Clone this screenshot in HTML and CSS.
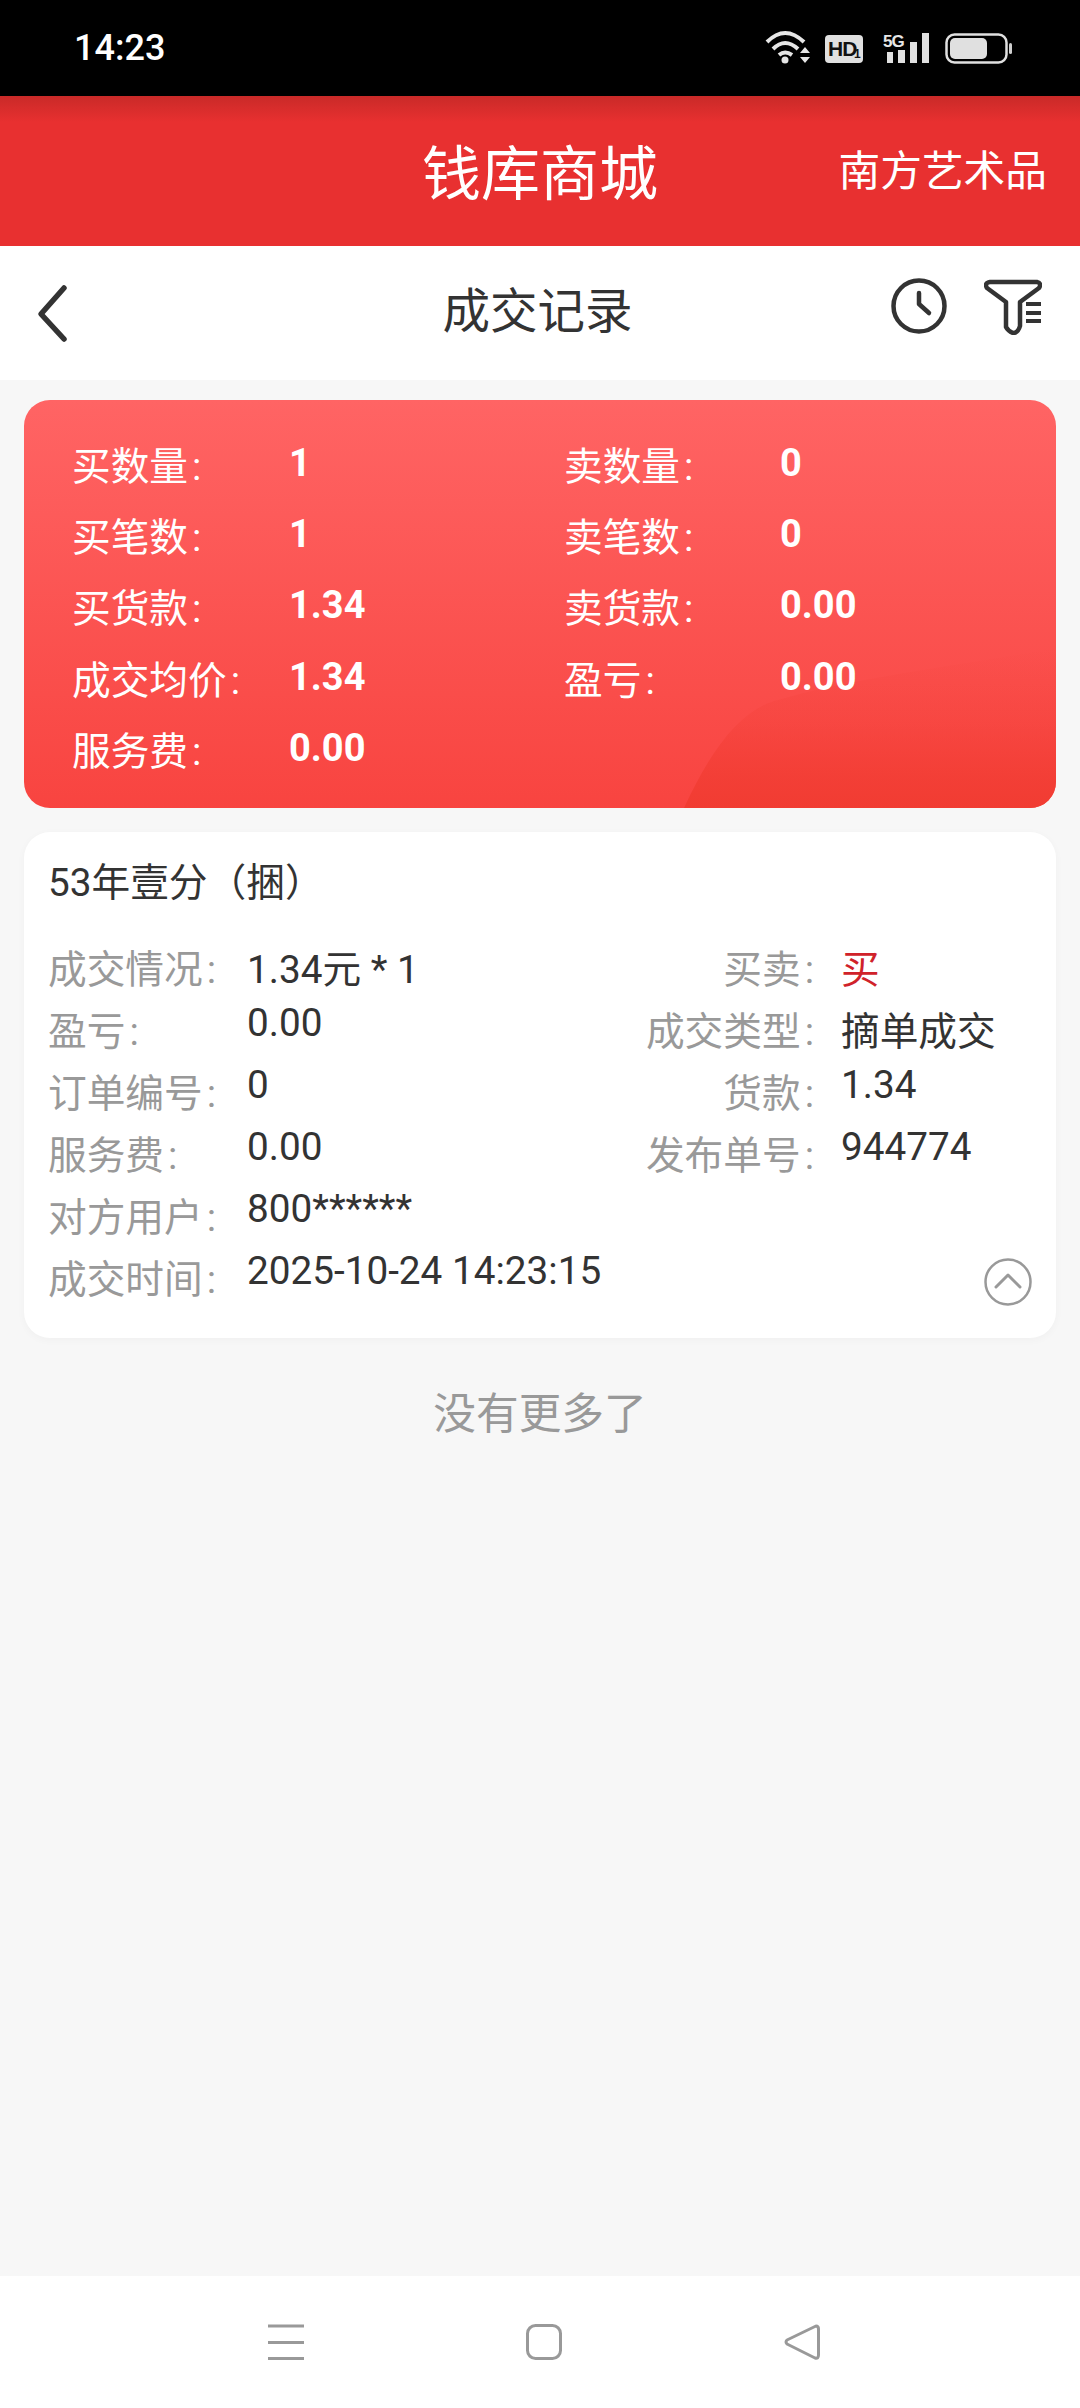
FILE: index.html
```html
<!DOCTYPE html>
<html lang="zh-CN">
<head>
<meta charset="utf-8">
<title>成交记录</title>
<link rel="stylesheet" href="styles.css">
</head>
<body>
<div class="status">
  <span class="time">14:23</span>
  <svg class="status-icons" width="250" height="40" viewBox="765 28 250 40">
    <g fill="none" stroke="#e6e6e6" stroke-width="4">
      <path d="M768 42 Q786 24 805 42"/>
      <path d="M774 49 Q786 37 799 49"/>
      <path d="M780 55 Q786 50 793 55"/>
    </g>
    <circle cx="786" cy="60" r="3.5" fill="#e6e6e6"/>
    <path d="M801 53 L806 47 L811 53 Z M801 57 L811 57 L806 63 Z" fill="#e6e6e6"/>
    <rect x="826" y="35" width="38" height="28" rx="4" fill="#e0e0e0"/>
    <text class="hd" x="829" y="56">HD</text>
    <text class="hd-sub" x="855" y="58">1</text>
    <text class="fiveg" x="884" y="47">5G</text>
    <g fill="#e0e0e0">
      <rect x="888" y="52" width="6" height="11"/>
      <rect x="899" y="50" width="7" height="13"/>
      <rect x="911" y="42" width="7" height="21"/>
      <rect x="923" y="33" width="7" height="30"/>
    </g>
    <rect x="947.5" y="34.5" width="60" height="28" rx="8" fill="none" stroke="#e0e0e0" stroke-width="2.5"/>
    <rect x="951" y="38" width="37" height="21" rx="5" fill="#e0e0e0"/>
    <rect x="1010" y="43" width="3" height="11" rx="1.5" fill="#cfcfcf"/>
  </svg>
</div>

<header class="brand">
  <span></span>
  <span class="brand-title">钱库商城</span>
  <span class="brand-side">南方艺术品</span>
</header>

<nav class="topnav">
  <svg class="back" width="40" height="60" viewBox="0 0 40 60">
    <path d="M31 5 L8 31 L31 56" fill="none" stroke="#333" stroke-width="5.5" stroke-linecap="round" stroke-linejoin="round"/>
  </svg>
  <span class="topnav-title">成交记录</span>
  <div class="topnav-tools">
    <svg width="58" height="58" viewBox="891 278 58 58">
      <circle cx="920" cy="307" r="25.5" fill="none" stroke="#333" stroke-width="4.5"/>
      <path d="M920 294 L920 305 L930 314" fill="none" stroke="#333" stroke-width="4.5" stroke-linecap="round" stroke-linejoin="round"/>
    </svg>
    <svg width="58" height="58" viewBox="985 278 58 58">
      <path d="M991 283 H1038 Q1043 284 1040 289 L1021 303 V327 Q1019 334 1014 334 Q1009 332 1007 328 V303 L988 289 Q985 284 991 283 Z" fill="none" stroke="#333" stroke-width="4.5" stroke-linejoin="round"/>
      <path d="M1027 305 H1042 M1027 314 H1042 M1027 322 H1042" fill="none" stroke="#333" stroke-width="4"/>
    </svg>
  </div>
</nav>

<main class="content">
  <section class="summary">
    <svg class="summary-wedge" width="372" height="160" viewBox="0 0 372 160">
      <defs>
        <linearGradient id="wedge" x1="0" y1="0" x2="0" y2="1">
          <stop offset="0" stop-color="#f13c32" stop-opacity="0"/>
          <stop offset="0.45" stop-color="#f13c32" stop-opacity="0.25"/>
          <stop offset="1" stop-color="#f13c32"/>
        </linearGradient>
      </defs>
      <path d="M0 160 C30 95 60 60 94 52 C170 30 260 20 372 0 V160 Z" fill="url(#wedge)"/>
    </svg>
    <div class="summary-grid">
      <span class="s-label">买数量<span class="colon">:</span></span><span class="s-value">1</span>
      <span class="s-label">卖数量<span class="colon">:</span></span><span class="s-value">0</span>
      <span class="s-label">买笔数<span class="colon">:</span></span><span class="s-value">1</span>
      <span class="s-label">卖笔数<span class="colon">:</span></span><span class="s-value">0</span>
      <span class="s-label">买货款<span class="colon">:</span></span><span class="s-value">1.34</span>
      <span class="s-label">卖货款<span class="colon">:</span></span><span class="s-value">0.00</span>
      <span class="s-label">成交均价<span class="colon">:</span></span><span class="s-value">1.34</span>
      <span class="s-label">盈亏<span class="colon">:</span></span><span class="s-value">0.00</span>
      <span class="s-label">服务费<span class="colon">:</span></span><span class="s-value">0.00</span>
    </div>
  </section>

  <section class="card">
    <h2 class="card-title">53年壹分（捆）</h2>
    <div class="card-grid">
      <span class="d-label">成交情况<span class="colon">:</span></span><span class="d-value">1.34元 * 1</span>
      <span class="d-label right">买卖<span class="colon">:</span></span><span class="d-value buy">买</span>
      <span class="d-label">盈亏<span class="colon">:</span></span><span class="d-value">0.00</span>
      <span class="d-label right">成交类型<span class="colon">:</span></span><span class="d-value">摘单成交</span>
      <span class="d-label">订单编号<span class="colon">:</span></span><span class="d-value">0</span>
      <span class="d-label right">货款<span class="colon">:</span></span><span class="d-value">1.34</span>
      <span class="d-label">服务费<span class="colon">:</span></span><span class="d-value">0.00</span>
      <span class="d-label right">发布单号<span class="colon">:</span></span><span class="d-value">944774</span>
      <span class="d-label">对方用户<span class="colon">:</span></span><span class="d-value">800******</span>
      <span></span><span></span>
      <span class="d-label">成交时间<span class="colon">:</span></span><span class="d-value wide">2025-10-24 14:23:15</span>
    </div>
    <svg class="collapse" width="50" height="50" viewBox="0 0 50 50">
      <circle cx="25" cy="25" r="22.5" fill="none" stroke="#999" stroke-width="2.5"/>
      <path d="M13 30 L25 18 L37 30" fill="none" stroke="#999" stroke-width="3" stroke-linecap="round" stroke-linejoin="round"/>
    </svg>
  </section>

  <p class="no-more">没有更多了</p>
</main>

<footer class="sysnav">
  <svg width="36" height="36" viewBox="0 0 36 36">
    <path d="M0 2 H36 M0 18.5 H36 M0 34.5 H36" stroke="#999" stroke-width="3.2" fill="none"/>
  </svg>
  <svg width="36" height="36" viewBox="0 0 36 36">
    <rect x="1.5" y="1.5" width="33" height="33" rx="8" fill="none" stroke="#999" stroke-width="3"/>
  </svg>
  <svg width="36" height="36" viewBox="0 0 36 36">
    <path d="M32 2 Q34.500 2 34.500 5 V31 Q34.500 35 31 34 L3 20 Q1 18 3 16 Z" fill="none" stroke="#999" stroke-width="3" stroke-linejoin="round"/>
  </svg>
</footer>
</body>
</html>
```
FILE: styles.css
```css
* { box-sizing: border-box; }

html, body { margin: 0; padding: 0; }

body {
  width: 1080px;
  height: 2408px;
  display: flex;
  flex-direction: column;
  background: #f7f7f7;
  font-family: Roboto, "Noto Sans CJK SC", sans-serif;
  color: #333;
  overflow: hidden;
}

.status {
  height: 96px;
  flex: none;
  background: #000;
  display: flex;
  align-items: center;
  justify-content: space-between;
  padding: 0 66px 0 74px;
}

.time {
  color: #fff;
  font-size: 36px;
  font-weight: 500;
}

.status-icons { display: block; }

.hd, .hd-sub, .fiveg {
  font-family: "Liberation Sans", sans-serif;
  font-weight: 700;
}

.hd { font-size: 21px; fill: #111; letter-spacing: -1px; }
.hd-sub { font-size: 12px; fill: #111; }
.fiveg { font-size: 17px; fill: #e6e6e6; letter-spacing: -1px; }

.brand {
  height: 150px;
  flex: none;
  display: grid;
  grid-template-columns: 1fr auto 1fr;
  align-items: center;
  color: #fff;
  background: linear-gradient(#c92a28 0, #e83030 26px, #e83030 100%);
}

.brand-title { font-size: 59px; line-height: 1; margin-top: 6px; }

.brand-side {
  font-size: 41.7px;
  line-height: 1;
  text-align: right;
  margin: 2px 33px 0 0;
  white-space: nowrap;
}

.topnav {
  height: 134px;
  flex: none;
  background: #fff;
  display: grid;
  grid-template-columns: 1fr auto 1fr;
  align-items: center;
  padding: 0 38px 0 33px;
}

.back { display: block; }

.topnav-title { font-size: 47.5px; line-height: 1; color: #333; }

.topnav-tools {
  display: flex;
  justify-content: flex-end;
  gap: 36px;
  margin-top: -14px;
}

.content {
  flex: 1;
  padding: 20px 24px 0;
  display: flex;
  flex-direction: column;
}

.summary {
  position: relative;
  height: 408px;
  border-radius: 26px;
  overflow: hidden;
  background: linear-gradient(#ff6464, #f84440);
  padding: 27px 0 0 48px;
  color: #fff;
}

.summary-wedge {
  position: absolute;
  right: 0;
  bottom: 0;
}

.summary-grid {
  position: relative;
  display: grid;
  grid-template-columns: 217px 275px 216px 1fr;
  grid-auto-rows: 71.3px;
  align-items: center;
  font-size: 38.7px;
}

.colon { margin-left: 4px; }

.s-value { font-weight: 700; font-size: 38px; }

.card {
  position: relative;
  margin-top: 24px;
  height: 506px;
  border-radius: 26px;
  background: #fff;
  box-shadow: 0 2px 8px rgba(0, 0, 0, 0.03);
  padding: 19px 24px 0;
}

.card-title {
  margin: 0;
  font-size: 38.7px;
  font-weight: 400;
  color: #333;
}

.card-grid {
  margin-top: 31px;
  display: grid;
  grid-template-columns: 199px 266px 328px 1fr;
  grid-auto-rows: 62px;
  align-items: start;
  font-size: 38.7px;
}

.d-label { color: #999; }

.d-label.right { text-align: right; padding-right: 27px; }

.d-value { color: #333; white-space: nowrap; }

.buy { color: #d0222a; }

.collapse {
  position: absolute;
  right: 23px;
  bottom: 31px;
}

.no-more {
  margin: 41px 0 0;
  text-align: center;
  font-size: 42.7px;
  color: #999;
}

.sysnav {
  height: 132px;
  flex: none;
  background: #fff;
  display: flex;
  justify-content: center;
  gap: 222px;
  padding: 48px 0 0 8px;
  align-items: flex-start;
}

.sysnav svg { display: block; }
```
